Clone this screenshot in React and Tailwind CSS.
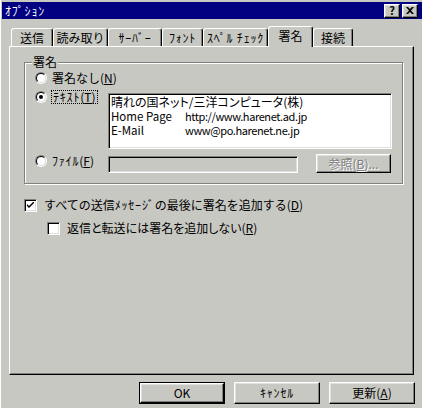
import React from 'react'

const raised =
  'border border-t-white border-l-white border-r-black border-b-black shadow-[inset_-1px_-1px_0_#808080,inset_1px_1px_0_#dfdfdf]'
const sunken =
  'border border-t-[#808080] border-l-[#808080] border-r-white border-b-white shadow-[inset_1px_1px_0_#000,inset_-1px_-1px_0_#dfdfdf]'

function Radio({ checked }) {
  return (
    <span className="w-[12px] h-[12px] shrink-0 rounded-full border border-t-[#808080] border-l-[#808080] border-r-white border-b-white flex">
      <span className="w-full h-full rounded-full border border-t-black border-l-black border-r-[#dfdfdf] border-b-[#dfdfdf] bg-white flex items-center justify-center">
        {checked && <span className="w-[4px] h-[4px] rounded-full bg-black" />}
      </span>
    </span>
  )
}

function Checkbox({ checked }) {
  return (
    <span className={`w-[13px] h-[13px] shrink-0 bg-white flex items-center justify-center ${sunken}`}>
      {checked && (
        <svg width="7" height="7" viewBox="0 0 7 7">
          <path d="M0 2 L0 4 L2 6 L7 1 L7 -1 L2 4 Z" fill="black" />
        </svg>
      )}
    </span>
  )
}

// half-width kana run, a touch wider like the bitmap font
function Hw({ children }) {
  return <span className="tracking-[0.8px]">{children}</span>
}

function Tab({ label, width, active }) {
  if (active) {
    return (
      <div
        className={`${width} h-[21px] -mb-[1px] relative z-10 bg-[#c8c8c3] border-t border-l border-r border-t-white border-l-white border-r-black rounded-t-[3px] shadow-[inset_-1px_0_0_#808080] flex items-center justify-center pb-[3px]`}
      >
        {label}
      </div>
    )
  }
  return (
    <div
      className={`${width} h-[18px] border-t border-l border-r border-t-white border-l-white border-r-black rounded-t-[3px] shadow-[inset_-1px_0_0_#808080] flex items-center justify-center`}
    >
      {label}
    </div>
  )
}

function Key({ k }) {
  return (
    <>
      (<span className="underline underline-offset-1">{k}</span>)
    </>
  )
}

export default function App() {
  return (
    <div className="w-[422px] h-[408px] overflow-hidden bg-[#c8c8c3] border-l border-l-white pl-[1px] pt-[2px] font-['Noto_Sans_CJK_JP',sans-serif] text-[12px] leading-[14px] text-black">
      {/* title bar */}
      <div className="h-[17px] bg-[#000080] flex items-center justify-between pl-[3px] pr-[4px]">
        <span className="text-white">
          <Hw>ｵﾌﾟｼｮﾝ</Hw>
        </span>
        <div className="flex gap-[2px]">
          <div className={`w-[16px] h-[14px] bg-[#c8c8c3] flex items-center justify-center text-[11px] font-bold leading-none ${raised}`}>
            ?
          </div>
          <div className={`w-[16px] h-[14px] bg-[#c8c8c3] flex items-center justify-center ${raised}`}>
            <svg width="8" height="7" viewBox="0 0 8 7">
              <path d="M0 0 L2 0 L4 2 L6 0 L8 0 L5 3.5 L8 7 L6 7 L4 5 L2 7 L0 7 L3 3.5 Z" fill="black" />
            </svg>
          </div>
        </div>
      </div>

      <div className="ml-[7px]">
        {/* tabs */}
        <div className="mt-[6px] h-[21px] ml-[2px] flex items-end">
          <Tab label="送信" width="w-[42px]" />
          <Tab label="読み取り" width="w-[55px]" />
          <Tab label={<Hw>ｻｰﾊﾞｰ</Hw>} width="w-[54px]" />
          <Tab label={<Hw>ﾌｫﾝﾄ</Hw>} width="w-[41px]" />
          <Tab label={<Hw>ｽﾍﾟﾙ ﾁｪｯｸ</Hw>} width="w-[65px]" />
          <Tab label="署名" width="w-[45px]" active />
          <Tab label="接続" width="w-[40px]" />
        </div>

        {/* panel */}
        <div className="w-[405px] h-[329px] border border-t-white border-l-white border-r-black border-b-black shadow-[inset_-1px_-1px_0_#808080]">
          <fieldset className="ml-[14px] mt-[8px] w-[379px] border border-[#808080] shadow-[inset_1px_1px_0_white,1px_1px_0_white] pl-[10px] pb-[10px]">
            <legend className="ml-[-3px] px-[1px] bg-[#c8c8c3]">署名</legend>

            <div className="mt-[2px] h-[14px] flex items-center gap-[5px]">
              <Radio />
              <span>
                署名なし<Key k="N" />
              </span>
            </div>

            <div className="mt-[5px] flex items-start">
              <div className="w-[73px] h-[14px] flex items-center gap-[4px]">
                <Radio checked />
                <span className="border border-dotted border-black px-[1px] leading-[12px]">
                  <Hw>ﾃｷｽﾄ</Hw>
                  <Key k="T" />
                </span>
              </div>
              <div className={`mt-[3px] w-[284px] h-[56px] bg-white pl-[2px] pt-[1px] leading-[14px] ${sunken}`}>
                <div className="[font-feature-settings:'palt']">晴れの国ネット/三洋コンピュータ(株)</div>
                <div className="flex text-[11.5px]">
                  <span className="w-[74px]">Home Page</span>
                  <span className="text-[11px] tracking-[-0.4px]">http://www.harenet.ad.jp</span>
                </div>
                <div className="flex text-[11.5px]">
                  <span className="w-[74px]">E-Mail</span>
                  <span className="text-[11px] tracking-[-0.4px]">www@po.harenet.ne.jp</span>
                </div>
              </div>
            </div>

            <div className="mt-[5px] flex items-start">
              <div className="w-[73px] h-[14px] flex items-center gap-[5px]">
                <Radio />
                <span>
                  <Hw>ﾌｧｲﾙ</Hw>
                  <Key k="F" />
                </span>
              </div>
              <div className={`mt-[2px] w-[190px] h-[17px] bg-[#c8c8c3] ${sunken}`} />
              <div className={`ml-[18px] w-[75px] h-[19px] flex items-center justify-center text-[#808080] [text-shadow:1px_1px_0_white] ${raised}`}>
                参照<Key k="B" />...
              </div>
            </div>
          </fieldset>

          <div className="mt-[14px] ml-[14px] h-[14px] flex items-center gap-[7px]">
            <Checkbox checked />
            <span>
              すべての送信<Hw>ﾒｯｾｰｼﾞ</Hw>の最後に署名を追加する<Key k="D" />
            </span>
          </div>
          <div className="mt-[9px] ml-[37px] h-[14px] flex items-center gap-[7px]">
            <Checkbox />
            <span className="[font-feature-settings:'palt']">
              返信と転送には署名を追加しない<Key k="R" />
            </span>
          </div>
        </div>

        {/* buttons */}
        <div className="mt-[7px] w-[406px] flex justify-end gap-[9px]">
          <div className="w-[86px] h-[22px] border border-black flex">
            <div className={`flex-1 flex items-center justify-center ${raised}`}>OK</div>
          </div>
          <div className={`w-[86px] h-[22px] flex items-center justify-center ${raised}`}>
            <Hw>ｷｬﾝｾﾙ</Hw>
          </div>
          <div className={`w-[86px] h-[22px] flex items-center justify-center ${raised}`}>
            更新<Key k="A" />
          </div>
        </div>
      </div>
    </div>
  )
}
